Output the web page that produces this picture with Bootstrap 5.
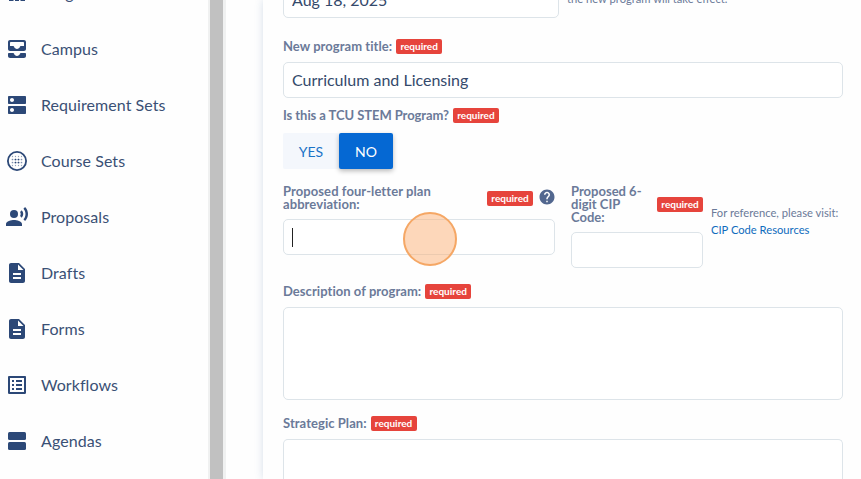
<!DOCTYPE html>
<html lang="en">
<head>
<meta charset="utf-8">
<meta name="viewport" content="width=device-width, initial-scale=1">
<title>Program proposal</title>
<link href="https://cdn.jsdelivr.net/npm/bootstrap@5.3.0/dist/css/bootstrap.min.css" rel="stylesheet">
<style>
body{font-family:Lato,"Open Sans",sans-serif;color:#2c4a7c;height:479px;background:#fefefe}
.side{width:208px;height:479px}
.side-list{margin-top:-35px}
.side-link{height:56px;padding-left:5px;gap:12px;font-size:16px;letter-spacing:.06px;color:#3a5075;text-decoration:none}
.side-link svg{width:24px;height:24px;fill:#2c4877;flex:none}
.track{width:18px;background:#f0f1f1;padding:0 3px 0 2px}
.thumb{background:#c1c1c1}
.sheet{margin-left:37px;width:620px;height:479px;padding-left:20px;background:#fefefe;box-shadow:0 0 8px rgba(70,110,160,.22)}
.fields{width:560px;height:479px;margin-top:-18px}
.fields>*{flex-shrink:0}
.box{height:36px;border:1px solid #dde4e9;border-radius:5px;background:#fff;padding:0 8px 2px;font-size:16px;line-height:32px;color:#34496b;box-shadow:none!important}
.box:focus{border-color:#dde4e9}
.date-box{width:276px}
.area{height:93px;resize:none}
.area-last{height:58px;border-bottom:0;border-radius:5px 5px 0 0}
.cap{font-size:13px;font-weight:700;line-height:13px;color:#6b7a99;margin:-1px 0 0;white-space:nowrap}
.cap-spaced{letter-spacing:.08px}
.cap-wide{letter-spacing:.05px}
.cap-tight{letter-spacing:-.07px}
.cap-row{gap:4px;height:15px}
.req{width:46px;height:15px;border-radius:2px;background:#e6443c;font-size:10px;line-height:14px;font-weight:700;padding:0;flex:none}
.hint{font-size:11.2px;line-height:17px;color:#6b7a99}
.hint a{color:#0f6cbd;text-decoration:none}
.hint-date{margin-top:-9px}
.yn{height:36px;font-size:14px;line-height:37px;padding:0;border:0;border-radius:2px}
.yn-yes{width:56px;background:#f4f7fc;color:#1a73c7}
.yn-no{width:54px;background:#0568d3;color:#fff;box-shadow:0 2px 5px rgba(0,0,0,.28)}
.caret{width:1px;height:19px;background:#222;margin-top:8px}
.tap{left:118.500px;top:-8px;width:54px;height:54px;border-radius:50%;background:rgba(251,176,118,.5);border:2px solid #f5a765}
.title-row{margin:21px 0 8px}
.stem-row{margin:10px 0}
.area-row{margin:16px 0 8px}
.plan{width:272px;flex:none;margin-right:16px}
.plan-cap{height:26px;margin-bottom:8px}
.help{margin:-2px -1px 0 5px}
.cip{width:132px;flex:none;margin-right:8px}
.cip-cap{height:39px;margin-bottom:8px}
.ref{padding-top:19px;white-space:nowrap}
</style>
<script src="https://cdn.jsdelivr.net/npm/bootstrap@5.3.0/dist/js/bootstrap.bundle.min.js"></script>
</head>
<body class="d-flex overflow-hidden">
<nav class="side flex-shrink-0 overflow-hidden">
 <div class="side-list d-flex flex-column">
  <a class="side-link d-flex align-items-center flex-shrink-0" href="#"><svg viewBox="0 0 24 24"><path d="M4 11h4.500v9H4zM10 11h4v9h-4zM15.500 11H20v9h-4.500zM4 9l8-6 8 6z"/></svg>Programs</a>
  <a class="side-link d-flex align-items-center flex-shrink-0" href="#"><svg viewBox="0 0 24 24"><path d="M19 3H5c-1.100 0-2 .9-2 2v7c0 1.100.9 2 2 2h14c1.100 0 2-.9 2-2V5c0-1.100-.9-2-2-2zm0 6h-3.140c-.47 0-.84.33-.97.780C14.530 11.040 13.350 12 12 12s-2.530-.96-2.890-2.220C8.980 9.330 8.610 9 8.140 9H5V6c0-.55.45-1 1-1h12c.55 0 1 .45 1 1v3zm-3.130 7H20c.55 0 1 .45 1 1v2c0 1.100-.9 2-2 2H5c-1.100 0-2-.9-2-2v-2c0-.55.45-1 1-1h4.130c.47 0 .85.34.98.8.35 1.270 1.510 2.200 2.890 2.200s2.540-.93 2.890-2.200c.13-.46.51-.8.98-.8z"/></svg>Campus</a>
  <a class="side-link d-flex align-items-center flex-shrink-0" href="#"><svg viewBox="0 0 24 24"><path d="M20 13H4c-.55 0-1 .45-1 1v6c0 .55.45 1 1 1h16c.55 0 1-.45 1-1v-6c0-.55-.45-1-1-1zM7 19c-1.100 0-2-.9-2-2s.9-2 2-2 2 .9 2 2-.9 2-2 2zM20 3H4c-.55 0-1 .45-1 1v6c0 .55.45 1 1 1h16c.55 0 1-.45 1-1V4c0-.55-.45-1-1-1zM7 9c-1.100 0-2-.9-2-2s.9-2 2-2 2 .9 2 2-.9 2-2 2z"/></svg>Requirement Sets</a>
  <a class="side-link d-flex align-items-center flex-shrink-0" href="#"><svg viewBox="0 0 24 24"><circle cx="12" cy="12" r="9.100" fill="none" stroke="#2c4877" stroke-width="1.800"/><g fill="none" stroke="#2c4877" stroke-width="1.700" stroke-linecap="round" stroke-dasharray="0 3"><path d="M7.500 10.500h9.100M7.500 13.500h9.100" opacity=".6"/><path d="M10.500 10.500h3.100M10.500 13.500h3.100"/><path stroke-width="1.300" opacity=".5" d="M7.500 7.500h9.100M7.500 16.500h9.100"/></g></svg>Course Sets</a>
  <a class="side-link d-flex align-items-center flex-shrink-0" href="#"><svg viewBox="0 0 24 24"><circle cx="9" cy="9" r="4"/><path d="M9 15c-2.670 0-8 1.340-8 4v2h16v-2c0-2.660-5.330-4-8-4zm7.760-9.640l-1.680 1.690c.84 1.180.84 2.710 0 3.890l1.680 1.690c2.020-2.020 2.020-5.070 0-7.270zM20.070 2l-1.630 1.630c2.770 3.020 2.770 7.560 0 10.740L20.070 16c3.900-3.890 3.910-9.950 0-14z"/></svg>Proposals</a>
  <a class="side-link d-flex align-items-center flex-shrink-0" href="#"><svg viewBox="0 0 24 24"><path d="M14 2H6c-1.100 0-2 .9-2 2v16c0 1.100.9 2 2 2h12c1.100 0 2-.9 2-2V8l-6-6zm2 16H8v-2h8v2zm0-4H8v-2h8v2zm-3-5V3.500L18.500 9H13z"/></svg>Drafts</a>
  <a class="side-link d-flex align-items-center flex-shrink-0" href="#"><svg viewBox="0 0 24 24"><path d="M14 2H6c-1.100 0-2 .9-2 2v16c0 1.100.9 2 2 2h12c1.100 0 2-.9 2-2V8l-6-6zm2 16H8v-2h8v2zm0-4H8v-2h8v2zm-3-5V3.500L18.500 9H13z"/></svg>Forms</a>
  <a class="side-link d-flex align-items-center flex-shrink-0" href="#"><svg viewBox="0 0 24 24"><path d="M19 5v14H5V5h14m1.100-2H3.900c-.5 0-.9.4-.9.900v16.200c0 .4.4.900.900.900h16.200c.4 0 .9-.5.900-.9V3.900c0-.5-.5-.9-.9-.9zM11 7h6v2h-6V7zm0 4h6v2h-6v-2zm0 4h6v2h-6zM7 7h2v2H7zm0 4h2v2H7zm0 4h2v2H7z"/></svg>Workflows</a>
  <a class="side-link d-flex align-items-center flex-shrink-0" href="#"><svg viewBox="0 0 24 24"><rect x="3" y="3" width="18" height="8" rx="1.500"/><rect x="3" y="13" width="18" height="8" rx="1.500"/></svg>Agendas</a>
 </div>
</nav>
<div class="track d-flex flex-shrink-0"><div class="thumb flex-fill"></div></div>
<main class="sheet flex-shrink-0">
 <div class="fields d-flex flex-column">
  <div class="d-flex gap-2">
   <input class="form-control box date-box" value="Aug 18, 2025" aria-label="Effective date">
   <div class="hint hint-date text-nowrap"><br>the new program will take effect.</div>
  </div>
  <div class="cap-row title-row d-flex align-items-center"><label class="cap cap-wide">New program title:</label><span class="badge req">required</span></div>
  <input class="form-control box" value="Curriculum and Licensing" aria-label="New program title">
  <div class="cap-row stem-row d-flex align-items-center"><label class="cap cap-tight">Is this a TCU STEM Program?</label><span class="badge req">required</span></div>
  <div class="d-flex"><button class="btn yn yn-yes">YES</button><button class="btn yn yn-no">NO</button></div>
  <div class="d-flex mt-3">
   <div class="plan">
    <div class="d-flex align-items-center plan-cap"><label class="cap cap-spaced flex-fill">Proposed four-letter plan<br>abbreviation:</label><span class="badge req">required</span>
     <svg class="help" width="18" height="18" viewBox="0 0 24 24"><path fill="#52678f" d="M12 2C6.480 2 2 6.480 2 12s4.480 10 10 10 10-4.480 10-10S17.520 2 12 2zm1 17h-2v-2h2v2zm2.070-7.750l-.9.920C13.450 12.900 13 13.500 13 15h-2v-.5c0-1.100.45-2.100 1.170-2.830l1.240-1.260c.37-.36.590-.86.590-1.410 0-1.100-.9-2-2-2s-2 .9-2 2H8c0-2.210 1.790-4 4-4s4 1.790 4 4c0 .88-.36 1.680-.93 2.250z"/></svg></div>
    <div class="box position-relative"><div class="caret"></div><div class="tap position-absolute"></div></div>
   </div>
   <div class="cip">
    <div class="d-flex align-items-center cip-cap"><label class="cap flex-fill">Proposed 6-<br>digit CIP<br>Code:</label><span class="badge req">required</span></div>
    <input class="form-control box" aria-label="CIP code">
   </div>
   <div class="hint ref">For reference, please visit:<br><a href="#">CIP Code Resources</a></div>
  </div>
  <div class="cap-row area-row d-flex align-items-center"><label class="cap cap-wide">Description of program:</label><span class="badge req">required</span></div>
  <textarea class="form-control box area" aria-label="Description of program"></textarea>
  <div class="cap-row area-row d-flex align-items-center"><label class="cap cap-wide">Strategic Plan:</label><span class="badge req">required</span></div>
  <textarea class="form-control box area area-last" aria-label="Strategic plan"></textarea>
 </div>
</main>
</body>
</html>
